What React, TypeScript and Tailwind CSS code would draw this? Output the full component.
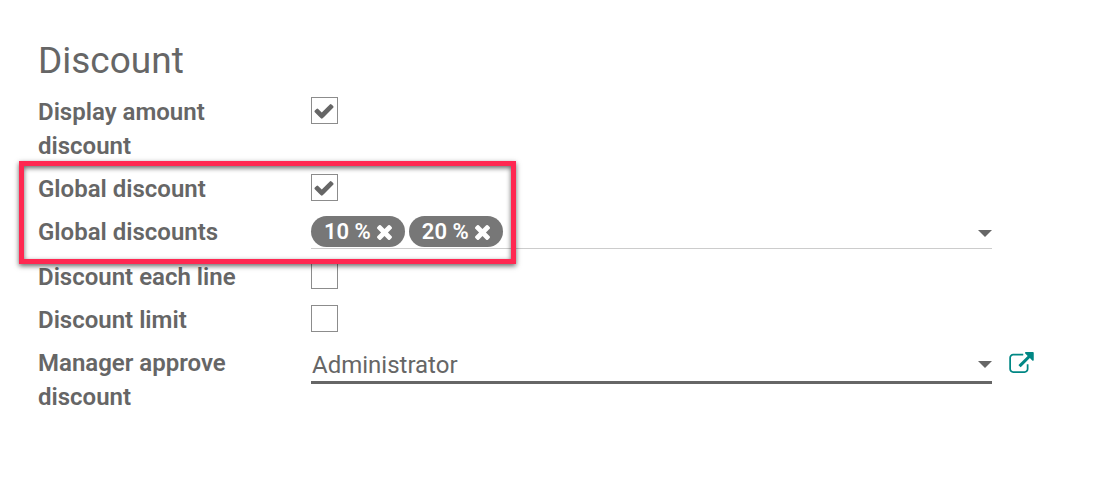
import { useState, type ReactNode } from "react";

function CheckIcon() {
  return (
    <svg viewBox="0 0 1792 1792" fill="currentColor" aria-hidden="true" className="pointer-events-none col-start-1 row-start-1 ml-[2px] size-[22px]">
      <path d="M1671 566q0 40-28 68l-724 724-136 136q-28 28-68 28t-68-28l-136-136-362-362q-28-28-28-68t28-68l136-136q28-28 68-28t68 28l294 295 656-657q28-28 68-28t68 28l136 136q28 28 28 68z" />
    </svg>
  );
}

function TimesIcon() {
  return (
    <svg viewBox="302 366 1188 1188" fill="currentColor" aria-hidden="true" className="size-[15px]">
      <path d="M1490 1322q0 40-28 68l-136 136q-28 28-68 28t-68-28l-294-294-294 294q-28 28-68 28t-68-28l-136-136q-28-28-28-68t28-68l294-294-294-294q-28-28-28-68t28-68l136-136q28-28 68-28t68 28l294 294 294-294q28-28 68-28t68 28l136 136q28 28 28 68t-28 68l-294 294 294 294q28 28 28 68z" />
    </svg>
  );
}

function ExternalLinkIcon() {
  return (
    <svg viewBox="64 61 1792 1536" fill="currentColor" aria-hidden="true" className="h-[21px] w-[25px]">
      <path d="M1472 989v320q0 119-84.5 203.5t-203.5 84.5h-832q-119 0-203.5-84.5t-84.5-203.5v-832q0-119 84.5-203.5t203.5-84.5h704q14 0 23 9t9 23v64q0 14-9 23t-23 9h-704q-66 0-113 47t-47 113v832q0 66 47 113t113 47h832q66 0 113-47t47-113v-320q0-14 9-23t23-9h64q14 0 23 9t9 23zm384-864v512q0 26-19 45t-45 19-45-19l-176-176-652 652q-10 10-23 10t-23-10l-114-114q-10-10-10-23t10-23l652-652-176-176q-19-19-19-45t19-45 45-19h512q26 0 45 19t19 45z" />
    </svg>
  );
}

function Caret() {
  return (
    <svg viewBox="0 0 14 7" fill="currentColor" aria-hidden="true" className="pointer-events-none h-[7px] w-[14px] shrink-0">
      <path d="M0 0h14L7 7z" />
    </svg>
  );
}

function Row({ id, label, action, children }: { id: string; label: string; action?: ReactNode; children: ReactNode }) {
  return (
    <div className="grid grid-cols-[273px_minmax(0,1fr)_70px]">
      <label htmlFor={id} className="pr-10 font-semibold">
        {label}
      </label>
      <div>{children}</div>
      <div className="pl-[17px]">{action}</div>
    </div>
  );
}

function CheckRow({ id, label, initial = false }: { id: string; label: string; initial?: boolean }) {
  const [checked, setChecked] = useState(initial);
  return (
    <Row id={id} label={label}>
      <span className="mt-[2px] inline-grid items-center align-top">
        <input
          id={id}
          type="checkbox"
          checked={checked}
          onChange={(e) => setChecked(e.target.checked)}
          className="col-start-1 row-start-1 size-[27px] appearance-none border border-[#8c8c8c] bg-white"
        />
        {checked && <CheckIcon />}
      </span>
    </Row>
  );
}

export default function App() {
  const [tags, setTags] = useState(["10 %", "20 %"]);
  return (
    <main className="bg-white pt-9 pr-[38px] pb-16 pl-[38px] font-['Roboto','Liberation_Sans',sans-serif] text-2xl leading-[34px] text-[#666666]">
      <h2 className="mb-[9px] text-[37px] leading-[50px] font-normal">Discount</h2>
      <form className="flex flex-col gap-[9px]">
        <CheckRow id="display-amount" label="Display amount discount" initial />
        <div className="relative flex flex-col gap-[9px] pb-[2px]">
          <CheckRow id="global-discount" label="Global discount" initial />
          <Row id="global-discounts" label="Global discounts">
            <div className="flex items-center gap-1 border-b border-[#cccccc] py-px">
              {tags.map((tag) => (
                <span key={tag} className="flex h-[31px] shrink-0 items-center gap-[6px] rounded-full bg-[#777777] px-[13px] pt-px text-[22px] font-semibold text-white">
                  {tag}
                  <button type="button" aria-label={`Remove ${tag}`} onClick={() => setTags(tags.filter((t) => t !== tag))}>
                    <TimesIcon />
                  </button>
                </span>
              ))}
              <input id="global-discounts" type="text" className="h-[31px] min-w-0 flex-1 bg-transparent outline-none" />
              <span className="pt-1">
                <Caret />
              </span>
            </div>
          </Row>
          <div className="pointer-events-none absolute -top-[11px] -bottom-[13px] -left-[19px] z-10 w-[497px] border-[5px] border-[#ff2851] shadow-[0_2px_5px_rgba(0,0,0,0.6),inset_0_2px_5px_rgba(0,0,0,0.6)]" />
        </div>
        <CheckRow id="each-line" label="Discount each line" />
        <CheckRow id="discount-limit" label="Discount limit" />
        <Row
          id="manager"
          label="Manager approve discount"
          action={
            <button type="button" aria-label="Open record" className="mt-[6px] block text-[#008784]">
              <ExternalLinkIcon />
            </button>
          }
        >
          <div className="grid items-center border-b-3 border-[#666666] pt-[2px]">
            <select id="manager" className="col-start-1 row-start-1 h-[33px] w-full appearance-none bg-transparent px-px outline-none">
              <option>Administrator</option>
            </select>
            <span className="pointer-events-none col-start-1 row-start-1 justify-self-end">
              <Caret />
            </span>
          </div>
        </Row>
      </form>
    </main>
  );
}
